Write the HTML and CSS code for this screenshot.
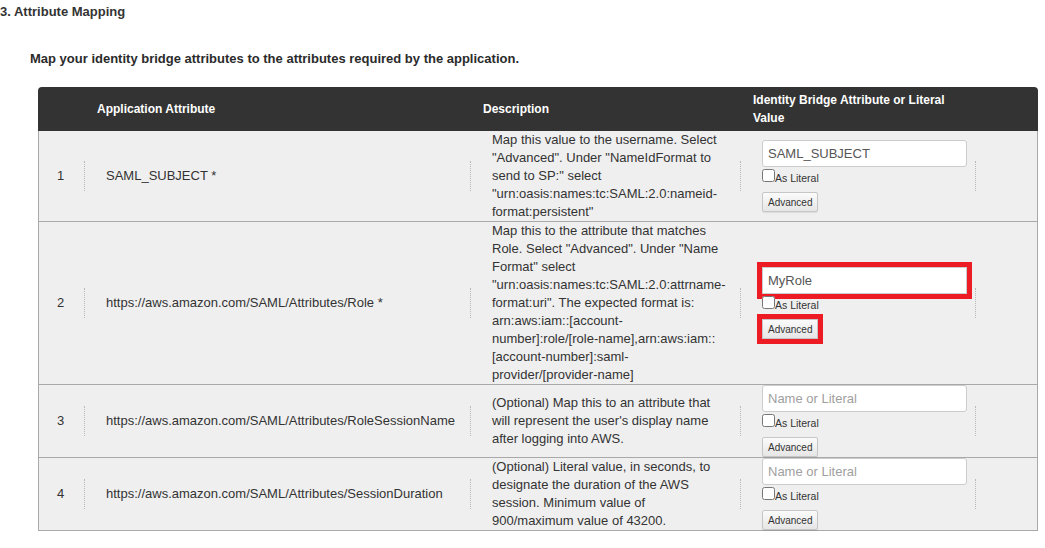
FILE: index.html
```html
<!DOCTYPE html>
<html lang="en">
<head>
<meta charset="utf-8">
<title>Attribute Mapping</title>
<link rel="stylesheet" href="styles.css">
</head>
<body>
<div class="page">
  <h3 class="title">3. Attribute Mapping</h3>
  <p class="intro">Map your identity bridge attributes to the attributes required by the application.</p>

  <div class="mapping">
    <div class="thead">
      <div class="th"></div>
      <div class="th">Application Attribute</div>
      <div class="th">Description</div>
      <div class="th">Identity Bridge Attribute or Literal<br>Value</div>
      <div class="th"></div>
    </div>

    <div class="row">
      <div class="num">1</div>
      <div class="cell"><div class="sep"></div><div class="content">SAML_SUBJECT *</div></div>
      <div class="cell"><div class="sep"></div><div class="content desc">Map this value to the username. Select<br>"Advanced". Under "NameIdFormat to<br>send to SP:" select<br>"urn:oasis:names:tc:SAML:2.0:nameid-<br>format:persistent"</div></div>
      <div class="cell"><div class="sep"></div><div class="content value">
        <input class="field" type="text" value="SAML_SUBJECT">
        <label class="lit"><input type="checkbox">As Literal</label>
        <button class="adv" type="button">Advanced</button>
      </div></div>
      <div class="cell"><div class="sep"></div></div>
    </div>

    <div class="row">
      <div class="num">2</div>
      <div class="cell"><div class="sep"></div><div class="content">https://aws.amazon.com/SAML/Attributes/Role *</div></div>
      <div class="cell"><div class="sep"></div><div class="content desc">Map this to the attribute that matches<br>Role. Select "Advanced". Under "Name<br>Format" select<br>"urn:oasis:names:tc:SAML:2.0:attrname-<br>format:uri". The expected format is:<br>arn:aws:iam::[account-<br>number]:role/[role-name],arn:aws:iam::<br>[account-number]:saml-<br>provider/[provider-name]</div></div>
      <div class="cell"><div class="sep"></div><div class="content value">
        <input class="field marked" type="text" value="MyRole">
        <label class="lit"><input type="checkbox">As Literal</label>
        <button class="adv marked" type="button">Advanced</button>
      </div></div>
      <div class="cell"><div class="sep"></div></div>
    </div>

    <div class="row">
      <div class="num">3</div>
      <div class="cell"><div class="sep"></div><div class="content">https://aws.amazon.com/SAML/Attributes/RoleSessionName</div></div>
      <div class="cell"><div class="sep"></div><div class="content desc">(Optional) Map this to an attribute that<br>will represent the user's display name<br>after logging into AWS.</div></div>
      <div class="cell"><div class="sep"></div><div class="content value">
        <input class="field" type="text" placeholder="Name or Literal">
        <label class="lit"><input type="checkbox">As Literal</label>
        <button class="adv" type="button">Advanced</button>
      </div></div>
      <div class="cell"><div class="sep"></div></div>
    </div>

    <div class="row">
      <div class="num">4</div>
      <div class="cell"><div class="sep"></div><div class="content">https://aws.amazon.com/SAML/Attributes/SessionDuration</div></div>
      <div class="cell"><div class="sep"></div><div class="content desc">(Optional) Literal value, in seconds, to<br>designate the duration of the AWS<br>session. Minimum value of<br>900/maximum value of 43200.</div></div>
      <div class="cell"><div class="sep"></div><div class="content value">
        <input class="field" type="text" placeholder="Name or Literal">
        <label class="lit"><input type="checkbox">As Literal</label>
        <button class="adv" type="button">Advanced</button>
      </div></div>
      <div class="cell"><div class="sep"></div></div>
    </div>
  </div>
</div>
</body>
</html>
```

FILE: styles.css
```css
html, body {
  margin: 0;
  padding: 0;
  background: #ffffff;
}

body {
  font-family: "Liberation Sans", Arial, sans-serif;
  color: #333333;
  font-size: 13px;
  line-height: 18px;
}

.page {
  padding-top: 3px;
}

.title {
  margin: 0;
  font-size: 13px;
  line-height: 18px;
  font-weight: bold;
  color: #333333;
}

.intro {
  margin: 29px 0 0 30px;
  font-size: 13px;
  line-height: 18px;
  font-weight: bold;
  color: #2b2b2b;
}

.mapping {
  margin: 19px 0 0 38px;
  width: 1000px;
}

.thead {
  display: grid;
  grid-template-columns: 46px 386px 270px 235px 63px;
  align-items: center;
  background: #333333;
  color: #ffffff;
  border-radius: 4px 4px 0 0;
  padding: 4px 0;
  font-size: 12px;
  line-height: 18px;
  font-weight: bold;
}

.th {
  padding-left: 13px;
}

.th:first-child {
  padding-left: 0;
}

.row {
  display: grid;
  grid-template-columns: 45px 386px 270px 235px 62px;
  align-items: center;
  background: #efefef;
  border: 1px solid #a9a9a9;
  border-top: 0;
}

.num {
  padding-left: 18px;
}

.cell {
  display: flex;
  align-items: center;
}

.sep {
  flex: none;
  width: 0;
  height: 30px;
  border-left: 1px dotted #b8b8b8;
}

.content {
  margin-left: 21px;
  white-space: nowrap;
}

.desc {
  color: #333333;
}

.value {
  display: flex;
  flex-direction: column;
  align-items: flex-start;
}

.field {
  box-sizing: border-box;
  width: 205px;
  height: 27px;
  margin: 0;
  padding: 0 5px;
  border: 1px solid #cccccc;
  border-radius: 3px;
  background: #ffffff;
  font-family: "Liberation Sans", Arial, sans-serif;
  font-size: 13px;
  color: #555555;
  outline: none;
}

.field::placeholder {
  color: #a0a0a0;
}

.lit {
  display: block;
  margin-top: 2px;
  font-size: 10.5px;
  line-height: 14px;
  color: #333333;
}

.lit input {
  margin: 0;
  width: 13px;
  height: 13px;
  vertical-align: baseline;
}

.adv {
  box-sizing: border-box;
  height: 20px;
  margin-top: 7px;
  padding: 0 5px;
  border: 1px solid #c6c6c6;
  border-radius: 2px;
  background: linear-gradient(#fbfbfb, #e6e6e6);
  font-family: "Liberation Sans", Arial, sans-serif;
  font-size: 10px;
  color: #333333;
  box-shadow: 0 1px 1px rgba(0, 0, 0, 0.08);
}

.marked,
.field.marked {
  border-radius: 0;
  outline: 5px solid #ed1c24;
  outline-offset: 0;
}
```
